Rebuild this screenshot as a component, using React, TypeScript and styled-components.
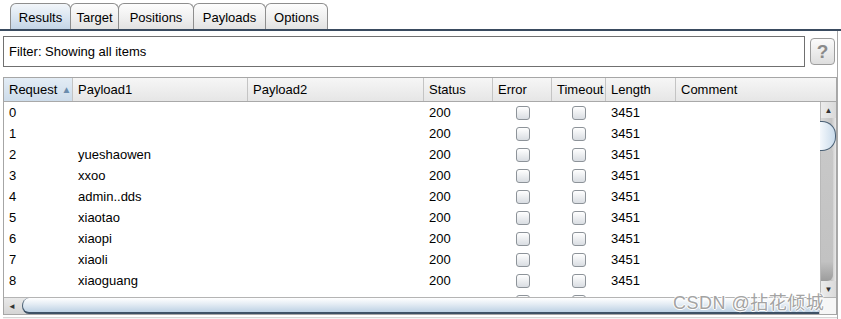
import React from 'react';
import styled, { createGlobalStyle } from 'styled-components';

type Row = { id: number; payload1: string };

const rows: Row[] = [
  { id: 0, payload1: '' },
  { id: 1, payload1: '' },
  { id: 2, payload1: 'yueshaowen' },
  { id: 3, payload1: 'xxoo' },
  { id: 4, payload1: 'admin..dds' },
  { id: 5, payload1: 'xiaotao' },
  { id: 6, payload1: 'xiaopi' },
  { id: 7, payload1: 'xiaoli' },
  { id: 8, payload1: 'xiaoguang' },
  { id: 9, payload1: 'xiaodi' },
];

const tabs = [
  { label: 'Results', width: 61 },
  { label: 'Target', width: 49 },
  { label: 'Positions', width: 76 },
  { label: 'Payloads', width: 73 },
  { label: 'Options', width: 63 },
];

const headerCols = '69px 175px 176px 69px 59px 54px 70px 1fr';

const App: React.FC = () => {
  return (
    <Page>
      <GlobalStyle />
      <TabBar>
        {tabs.map((t, i) => (
          <Tab key={t.label} $active={i === 0} $width={t.width}>
            {t.label}
          </Tab>
        ))}
      </TabBar>

      <Content>
        <FilterRow>
          <FilterBox>Filter: Showing all items</FilterBox>
          <HelpButton>?</HelpButton>
        </FilterRow>

        <Table>
          <HeaderRow>
            <HeaderCell $sorted>
              Request <SortArrow>▲</SortArrow>
            </HeaderCell>
            <HeaderCell>Payload1</HeaderCell>
            <HeaderCell>Payload2</HeaderCell>
            <HeaderCell>Status</HeaderCell>
            <HeaderCell>Error</HeaderCell>
            <HeaderCell>Timeout</HeaderCell>
            <HeaderCell>Length</HeaderCell>
            <HeaderCell $last>Comment</HeaderCell>
          </HeaderRow>

          <BodyArea>
            <Viewport>
              {rows.map((r) => (
                <DataRow key={r.id}>
                  <Cell>{r.id}</Cell>
                  <Cell>{r.payload1}</Cell>
                  <Cell />
                  <Cell>200</Cell>
                  <CheckCell>
                    <CheckBox />
                  </CheckCell>
                  <CheckCell>
                    <CheckBox />
                  </CheckCell>
                  <Cell>3451</Cell>
                  <Cell />
                </DataRow>
              ))}
            </Viewport>
            <VScroll>
              <ArrowButton>▲</ArrowButton>
              <VTrack>
                <VThumb />
                <VThumbBody />
              </VTrack>
              <ArrowButton>▼</ArrowButton>
            </VScroll>
          </BodyArea>

          <HScrollRow>
            <HScroll>
              <HArrow>◄</HArrow>
              <HThumb />
            </HScroll>
            <Corner />
          </HScrollRow>
        </Table>
        <StatusStrip />
      </Content>

      <Watermark>CSDN @拈花倾城</Watermark>
    </Page>
  );
};

const GlobalStyle = createGlobalStyle`
  html, body {
    margin: 0;
    padding: 0;
    background: #ffffff;
  }
  body {
    font-family: "Liberation Sans", Arial, sans-serif;
    font-size: 13px;
    color: #000;
  }
`;

const Page = styled.div`
  position: relative;
  width: 841px;
  height: 319px;
  overflow: hidden;
  background: #ffffff;
  display: flex;
  flex-direction: column;
`;

const TabBar = styled.div`
  flex: none;
  height: 29px;
  padding-left: 10px;
  display: flex;
  align-items: flex-end;
  border-bottom: 2px solid #3a4b60;
  box-sizing: content-box;
`;

const Tab = styled.div<{ $active?: boolean; $width: number }>`
  flex: none;
  width: ${(p) => p.$width}px;
  height: 26px;
  box-sizing: border-box;
  margin-right: -1px;
  display: flex;
  align-items: center;
  justify-content: center;
  padding-top: 1px;
  font-size: 13px;
  border: 1px solid #8e8e8e;
  border-bottom: none;
  border-radius: 6px 6px 0 0;
  background: ${(p) =>
    p.$active
      ? 'linear-gradient(to bottom, #f2f6fa 0%, #dbe6f1 50%, #c4d5e6 100%)'
      : 'linear-gradient(to bottom, #fdfdfd 0%, #eeeeee 60%, #e2e2e2 100%)'};
`;

const Content = styled.div`
  flex: 1;
  display: flex;
  flex-direction: column;
  padding: 5px 0 0 3px;
  width: 838px;
  box-sizing: border-box;
  border-right: 1px solid #a9a9a9;
`;

const FilterRow = styled.div`
  display: flex;
  align-items: center;
  gap: 5px;
`;

const FilterBox = styled.div`
  width: 802px;
  height: 31px;
  box-sizing: border-box;
  border: 1px solid #707070;
  padding-left: 5px;
  display: flex;
  align-items: center;
  font-size: 13px;
  background: #fff;
`;

const HelpButton = styled.div`
  width: 25px;
  height: 27px;
  box-sizing: border-box;
  border: 1px solid #9c9c9c;
  border-radius: 4px;
  background: linear-gradient(to bottom, #fbfbfb, #dedede);
  display: flex;
  align-items: center;
  justify-content: center;
  color: #8a8a8a;
  font-size: 19px;
  font-weight: bold;
`;

const Table = styled.div`
  margin-top: 10px;
  width: 834px;
  box-sizing: border-box;
  border: 1px solid #a6a6a6;
  display: flex;
  flex-direction: column;
  background: #fff;
`;

const HeaderRow = styled.div`
  display: grid;
  grid-template-columns: ${headerCols};
  height: 24px;
  box-sizing: border-box;
  border-bottom: 1px solid #a9a9a9;
`;

const HeaderCell = styled.div<{ $sorted?: boolean; $last?: boolean }>`
  display: flex;
  align-items: center;
  padding-left: 5px;
  box-sizing: border-box;
  font-size: 13px;
  border-right: ${(p) => (p.$last ? 'none' : '1px solid #c4c4c4')};
  background: ${(p) =>
    p.$sorted
      ? 'linear-gradient(to bottom, #e3ecf5, #cddcea)'
      : 'linear-gradient(to bottom, #f6f6f6, #e6e6e6)'};
`;

const SortArrow = styled.span`
  margin-left: 4px;
  font-size: 10px;
  color: #6a8cad;
`;

const BodyArea = styled.div`
  display: flex;
  height: 195px;
`;

const Viewport = styled.div`
  flex: 1;
  overflow: hidden;
`;

const DataRow = styled.div`
  display: grid;
  grid-template-columns: ${headerCols};
  height: 21px;
`;

const Cell = styled.div`
  padding-left: 5px;
  line-height: 21px;
  font-size: 13px;
  white-space: nowrap;
`;

const CheckCell = styled.div`
  display: flex;
  align-items: center;
  justify-content: center;
`;

const CheckBox = styled.div`
  width: 14px;
  height: 14px;
  box-sizing: border-box;
  border: 1px solid #8d9399;
  border-radius: 3px;
  background: linear-gradient(to bottom, #ffffff, #d9dde2);
`;

const VScroll = styled.div`
  width: 16px;
  display: flex;
  flex-direction: column;
  background: linear-gradient(to right, #d8d8d8, #c6c6c6 70%, #e8e8e8);
  border-left: 1px solid #b9b9b9;
  box-sizing: border-box;
`;

const ArrowButton = styled.div`
  height: 16px;
  display: flex;
  align-items: center;
  justify-content: center;
  font-size: 8px;
  color: #333;
  background: linear-gradient(to right, #ececec, #dadada);
`;

const VTrack = styled.div`
  flex: 1;
  display: flex;
  flex-direction: column;
  padding-top: 3px;
`;

const VThumb = styled.div`
  height: 28px;
  margin-left: -1px;
  border-radius: 0 14px 14px 0 / 0 14px 14px 0;
  border: 1px solid #4a6075;
  border-left: none;
  background: linear-gradient(to right, #f4f8fc, #c9dbeb);
`;

const VThumbBody = styled.div`
  flex: 1;
  margin-right: 3px;
  border-radius: 0 0 6px 0;
  background: linear-gradient(to bottom, #c8c8c8, #c2c2c2 85%, #9c9c9c);
`;

const HScrollRow = styled.div`
  display: flex;
  height: 16px;
  border-top: 1px solid #b4b4b4;
`;

const HScroll = styled.div`
  flex: 1;
  display: flex;
  align-items: stretch;
  background: linear-gradient(to bottom, #e9e9e9, #d5d5d5);
`;

const HArrow = styled.div`
  width: 16px;
  display: flex;
  align-items: center;
  justify-content: center;
  font-size: 8px;
  color: #333;
`;

const HThumb = styled.div`
  flex: 1;
  margin-left: 2px;
  box-sizing: border-box;
  border-left: 1px solid #4a6075;
  border-bottom: 2px solid #3e5165;
  border-radius: 14px 0 0 14px / 16px 0 0 16px;
  background: linear-gradient(to bottom, #ffffff, #e7eef5 40%, #bdd1e4);
`;

const Corner = styled.div`
  width: 16px;
  background: #f6f6f6;
  border-left: 1px solid #c8c8c8;
`;

const StatusStrip = styled.div`
  height: 3px;
  margin-top: 2px;
  border-top: 1px solid #d6d6d6;
  background: #f4f4f4;
`;

const Watermark = styled.div`
  position: absolute;
  left: 673px;
  top: 288px;
  font-family: "Liberation Sans", "Noto Sans CJK SC", sans-serif;
  font-size: 18px;
  color: #a3a3a3;
  letter-spacing: 0.5px;
  text-shadow: 1px 0 #fff, -1px 0 #fff, 0 1px #fff, 0 -1px #fff;
  white-space: nowrap;
`;

export default App;
